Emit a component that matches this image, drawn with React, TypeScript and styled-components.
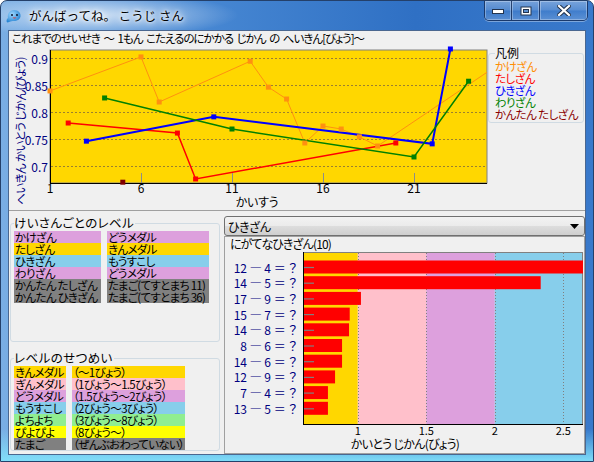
import React from "react";
import styled, { createGlobalStyle } from "styled-components";

const GlobalStyle = createGlobalStyle`
  html, body { margin: 0; padding: 0; background: #ffffff; }
  body {
    font-family: "Noto Sans CJK JP", "Noto Sans", sans-serif;
    font-feature-settings: "palt";
  }
`;

const Frame = styled.div`
  position: relative;
  width: 594px;
  height: 462px;
  box-sizing: border-box;
  border: 1px solid #24406a;
  border-radius: 7px 7px 0 0;
  padding: 0 7px 6px 7px;
  display: flex;
  flex-direction: column;
  overflow: hidden;
  background:
    radial-gradient(ellipse 190px 30px at 95px 14px, rgba(255, 255, 255, 0.7), rgba(255, 255, 255, 0) 75%),
    linear-gradient(180deg, rgba(0, 0, 0, 0) 93%, rgba(130, 225, 250, 0.95) 100%),
    linear-gradient(90deg, #7aaee4 0%, #4d8dd6 25%, #2f70c4 70%, #3979cb 100%);
`;

const TitleBar = styled.div`
  height: 29px;
  margin: 0 -7px;
  padding: 0 5px 0 4px;
  display: flex;
  align-items: flex-start;
  flex-shrink: 0;
`;

const AppIcon = styled.svg`
  margin-top: 7px;
  flex-shrink: 0;
`;

const TitleText = styled.div`
  margin-left: 7px;
  line-height: 29px;
  font-size: 12.5px;
  font-feature-settings: normal;
  color: #000;
  text-shadow: 0 0 6px #fff, 0 0 3px #fff, 0 0 10px #fff;
  flex: 1;
  white-space: pre;
`;

const CaptionGroup = styled.div`
  display: flex;
  height: 19px;
  border-radius: 0 0 5px 5px;
  border: 1px solid rgba(18, 38, 78, 0.75);
  border-top: none;
  overflow: hidden;
  box-shadow: 0 1px 0 rgba(255, 255, 255, 0.35);
`;

const CaptionButton = styled.div<{ $w: number; $last?: boolean }>`
  width: ${(p) => p.$w}px;
  height: 100%;
  box-sizing: border-box;
  border-right: ${(p) => (p.$last ? "none" : "1px solid rgba(18, 38, 78, 0.75)")};
  display: flex;
  align-items: center;
  justify-content: center;
  background: linear-gradient(
    180deg,
    rgba(255, 255, 255, 0.32) 0%,
    rgba(255, 255, 255, 0.16) 48%,
    rgba(255, 255, 255, 0.04) 52%,
    rgba(255, 255, 255, 0.18) 100%
  );
  box-shadow: inset 0 0 0 1px rgba(255, 255, 255, 0.3);
`;

const Client = styled.div`
  flex: 1;
  min-height: 0;
  border: 1px solid #4a6790;
  background: #f0f0f0;
  display: flex;
  flex-direction: column;
  color: #000;
`;

const TopPanel = styled.div`
  height: 179px;
  border-bottom: 1px solid #a0a0a0;
  display: flex;
  flex-direction: column;
  flex-shrink: 0;
`;

const ChartTitle = styled.div`
  height: 15px;
  line-height: 15px;
  padding-left: 3px;
  font-size: 11.5px;
  letter-spacing: -1px;
  word-spacing: 2px;
  white-space: pre;
`;

const ChartRow = styled.div`
  display: flex;
  align-items: flex-start;
`;

const LegendBox = styled.fieldset`
  margin: 0;
  min-width: 0;
  width: 96px;
  box-sizing: border-box;
  padding: 0 0 2px 6px;
  border: 1px solid #d0dbe3;
  border-radius: 3px;
`;

const BoxTitle = styled.legend`
  padding: 0 1px 0 0;
  line-height: 14px;
  font-size: 12px;
`;

const LegendItem = styled.div<{ $color: string }>`
  color: ${(p) => p.$color};
  font-size: 11.5px;
  line-height: 12px;
  letter-spacing: -0.6px;
  white-space: nowrap;
`;

const Lower = styled.div`
  flex: 1;
  min-height: 0;
  display: flex;
  gap: 1px;
`;

const LeftPane = styled.div`
  width: 213px;
  flex-shrink: 0;
  padding: 5px 0 0 1px;
  box-sizing: border-box;
  display: flex;
  flex-direction: column;
`;

const GroupBox = styled.fieldset<{ $gap?: number; $bottom: number }>`
  margin: ${(p) => p.$gap ?? 0}px 0 0 0;
  min-width: 0;
  width: 210px;
  box-sizing: border-box;
  padding: 1px 0 ${(p) => p.$bottom}px 3px;
  border: 1px solid #d0dbe3;
  border-radius: 3px;
`;

const GroupTitle = styled.legend`
  padding: 0 1px 0 0;
  line-height: 14px;
  font-size: 12.5px;
  letter-spacing: 0.4px;
`;

const LevelGrid = styled.div<{ $cols: string }>`
  display: grid;
  grid-template-columns: ${(p) => p.$cols};
  column-gap: 6px;
`;

const Cell = styled.div<{ $bg: string }>`
  background: ${(p) => p.$bg};
  height: 12px;
  line-height: 12px;
  font-size: 11.5px;
  padding-left: 1px;
  white-space: nowrap;
  letter-spacing: -0.7px;
`;

const RightPane = styled.div`
  flex: 1;
  min-width: 0;
  display: flex;
  flex-direction: column;
  padding: 5px 0 0 1px;
`;

const Combo = styled.div`
  height: 20px;
  box-sizing: border-box;
  border: 1px solid #707070;
  border-radius: 3px;
  background: linear-gradient(180deg, #f2f2f2 0%, #ebebeb 50%, #dddddd 50%, #cfcfcf 100%);
  display: flex;
  align-items: center;
  padding: 0 5px 0 3px;
  font-size: 12px;
  letter-spacing: -0.4px;
  flex-shrink: 0;
`;

const ComboText = styled.span`
  flex: 1;
`;

const ListPanel = styled.div`
  flex: 1;
  min-height: 0;
  border: 1px solid #a0a0a0;
  display: flex;
  flex-direction: column;
`;

const PanelTitle = styled.div`
  height: 14px;
  line-height: 14px;
  padding-left: 5px;
  font-size: 12px;
  letter-spacing: -0.9px;
  white-space: nowrap;
`;

type Pt = [number, number];
interface Series {
  name: string;
  color: string;
  text: string;
  width: number;
  points: Pt[];
}

const series: Series[] = [
  {
    name: "かけざん",
    color: "#ff9010",
    text: "#ff8c00",
    width: 1,
    points: [
      [1, 0.839], [6, 0.902], [7, 0.8185], [12, 0.894], [13, 0.846], [14, 0.824],
      [15, 0.7426], [16, 0.774], [17, 0.7685], [18, 0.754], [19, 0.737], [26, 0.896],
    ],
  },
  {
    name: "たしざん",
    color: "#ff0000",
    text: "#ff0000",
    width: 1.5,
    points: [[2, 0.7796], [8, 0.761], [9, 0.676], [20, 0.7426]],
  },
  {
    name: "ひきざん",
    color: "#0000ff",
    text: "#0000ff",
    width: 2,
    points: [[3, 0.746], [10, 0.791], [22, 0.741], [23, 0.9167]],
  },
  {
    name: "わりざん",
    color: "#008000",
    text: "#008000",
    width: 1.5,
    points: [[4, 0.826], [11, 0.7685], [21, 0.7167], [24, 0.857]],
  },
  { name: "かんたん たしざん", color: "#800000", text: "#8b0000", width: 1.5, points: [[5, 0.67]] },
];

const px = (n: number) => 41 + (n - 1) * 18.2;
const py = (v: number) => 120 - (v - 0.7) * 540;

const LineChart = () => {
  const grid = [0.7, 0.75, 0.8, 0.85, 0.9];
  const ticks = [1, 6, 11, 16, 21];
  return (
    <svg width={479} height={164} style={{ flexShrink: 0, display: "block" }}>
      <defs>
        <clipPath id="plotClip">
          <rect x={41} y={4} width={437} height={133} />
        </clipPath>
      </defs>
      <rect x={41} y={4} width={437} height={133} fill="#ffd700" stroke="#808080" strokeWidth={1} />
      {grid.map((g) => (
        <line key={g} x1={42} x2={477} y1={Math.round(py(g)) + 0.5} y2={Math.round(py(g)) + 0.5} stroke="#9a8030" strokeDasharray="2 2" />
      ))}
      {ticks.slice(1).map((t) => (
        <line key={t} x1={Math.round(px(t)) + 0.5} x2={Math.round(px(t)) + 0.5} y1={127} y2={137} stroke="#8c8c8c" />
      ))}
      <line x1={41.5} x2={41.5} y1={4} y2={137.5} stroke="#000" />
      <line x1={41} x2={478} y1={137.5} y2={137.5} stroke="#000" />
      <g clipPath="url(#plotClip)">
        {series.map((s) => (
          <polyline
            key={s.name}
            points={s.points.map(([n, v]) => `${px(n)},${py(v)}`).join(" ")}
            fill="none"
            stroke={s.color}
            strokeWidth={s.width}
          />
        ))}
      </g>
      {series.map((s) =>
        s.points
          .filter(([n]) => n <= 25)
          .map(([n, v]) => (
            <rect key={s.name + n} x={px(n) - 2.5} y={py(v) - 2.5} width={5} height={5} fill={s.color} />
          ))
      )}
      {grid.map((g) => (
        <text key={g} x={39} y={py(g)} textAnchor="end" dominantBaseline="central" fontSize={12} fill="#000080">
          {String(g)}
        </text>
      ))}
      {ticks.map((t) => (
        <text key={t} x={px(t)} y={141} textAnchor="middle" dominantBaseline="central" fontSize={12} fill="#000">
          {t}
        </text>
      ))}
      <text x={248} y={155} textAnchor="middle" dominantBaseline="central" fontSize={12} letterSpacing={-0.3} fill="#000">
        かいすう
      </text>
      <text
        x={11}
        y={85}
        transform="rotate(-90 11 85)"
        textAnchor="middle"
        dominantBaseline="central"
        fontSize={11.5}
        letterSpacing={-0.6}
        fill="#000080"
      >
        へいきん かいとう じかん(びょう)
      </text>
    </svg>
  );
};

const bands = [
  { from: 0.6, to: 1, color: "#ffd700" },
  { from: 1, to: 1.5, color: "#ffc0cb" },
  { from: 1.5, to: 2, color: "#dda0dd" },
  { from: 2, to: 2.644, color: "#87ceeb" },
];

const problems: { label: string; time: number }[] = [
  { label: "12 ― 4 ＝ ？", time: 2.9 },
  { label: "14 ― 5 ＝ ？", time: 2.335 },
  { label: "17 ― 9 ＝ ？", time: 1.023 },
  { label: "15 ― 7 ＝ ？", time: 0.941 },
  { label: "14 ― 8 ＝ ？", time: 0.936 },
  { label: "8 ― 6 ＝ ？", time: 0.885 },
  { label: "14 ― 6 ＝ ？", time: 0.885 },
  { label: "12 ― 9 ＝ ？", time: 0.834 },
  { label: "7 ― 4 ＝ ？", time: 0.782 },
  { label: "13 ― 5 ＝ ？", time: 0.782 },
];

const bx = (v: number) => 78 + (v - 0.6) * 137;

const BarChart = () => (
  <svg width={360} height={201} style={{ display: "block" }}>
    <defs>
      <clipPath id="barClip">
        <rect x={78} y={1} width={280} height={172} />
      </clipPath>
    </defs>
    {bands.map((b) => (
      <rect key={b.color} x={bx(b.from)} y={1} width={bx(b.to) - bx(b.from)} height={172} fill={b.color} />
    ))}
    <rect x={78.5} y={1.5} width={279} height={172} fill="none" stroke="#808080" />
    {[1, 1.5, 2, 2.5].map((g) => (
      <line key={g} x1={Math.round(bx(g)) + 0.5} x2={Math.round(bx(g)) + 0.5} y1={2} y2={173} stroke="#808080" strokeDasharray="1 2" />
    ))}
    <g clipPath="url(#barClip)">
      {problems.map((p, i) => {
        const cy = 16 + i * 15.7;
        return (
          <g key={i}>
            <rect x={78} y={cy - 6.5} width={bx(p.time) - 78} height={13} fill="#ff0000" />
            <line x1={79} x2={89} y1={cy + 0.5} y2={cy + 0.5} stroke="#808080" strokeWidth={1.2} />
          </g>
        );
      })}
    </g>
    <line x1={78.5} x2={78.5} y1={1} y2={173.5} stroke="#000" />
    <line x1={78} x2={358} y1={173.5} y2={173.5} stroke="#000" />
    {problems.map((p, i) => (
      <text key={i} x={72} y={16 + i * 15.7} textAnchor="end" dominantBaseline="central" fontSize={12} fill="#000080">
        {p.label}
      </text>
    ))}
    {[1, 1.5, 2, 2.5].map((g) => (
      <text key={g} x={bx(g)} y={179} textAnchor="middle" dominantBaseline="central" fontSize={11} fill="#000">
        {String(g)}
      </text>
    ))}
    <text x={180} y={192} textAnchor="middle" dominantBaseline="central" fontSize={12} letterSpacing={-0.7} fill="#000">
      かいとう じかん(びょう)
    </text>
  </svg>
);

const levels = [
  { op: "かけざん", medal: "どうメダル", bg: "#dda0dd" },
  { op: "たしざん", medal: "きんメダル", bg: "#ffd700" },
  { op: "ひきざん", medal: "もうすこし", bg: "#87ceeb" },
  { op: "わりざん", medal: "どうメダル", bg: "#dda0dd" },
  { op: "かんたん たしざん", medal: "たまご(てすとまち 11)", bg: "#808080" },
  { op: "かんたん ひきざん", medal: "たまご(てすとまち 36)", bg: "#808080" },
];

const legendRows = [
  { name: "きんメダル", desc: "（〜1びょう）", bg: "#ffd700" },
  { name: "ぎんメダル", desc: "（1びょう〜1.5びょう）", bg: "#ffc0cb" },
  { name: "どうメダル", desc: "（1.5びょう〜2びょう）", bg: "#dda0dd" },
  { name: "もうすこし", desc: "（2びょう〜3びょう）", bg: "#87ceeb" },
  { name: "よちよち", desc: "（3びょう〜8びょう）", bg: "#90ee90" },
  { name: "ぴよぴよ", desc: "（8びょう〜）", bg: "#ffff00" },
  { name: "たまご", desc: "（ぜんぶおわっていない）", bg: "#808080" },
];

const SealIcon = () => (
  <AppIcon width={17} height={17} viewBox="0 0 17 17">
    <defs>
      <radialGradient id="sealBody" cx="0.4" cy="0.35" r="0.7">
        <stop offset="0" stopColor="#9fd8ff" />
        <stop offset="1" stopColor="#1f7fd0" />
      </radialGradient>
    </defs>
    <path d="M4 14 C1 16 1 11 3 10 C2 6 5 2 9 2 C13.5 2 16 5 15.5 8.5 C15 11.5 12 13 9 13 C7 13 6 13 4 14 Z" fill="url(#sealBody)" />
    <circle cx={7} cy={7} r={1.1} fill="#102040" />
    <circle cx={12} cy={7} r={1.1} fill="#102040" />
    <path d="M7.5 9.5 Q9.5 11.5 11.5 9.5 Z" fill="#e03030" />
  </AppIcon>
);

const MinGlyph = () => (
  <svg width={12} height={6} viewBox="0 0 12 6">
    <rect x={0.5} y={1.5} width={11} height={4} fill="#fff" stroke="#23344f" />
  </svg>
);

const MaxGlyph = () => (
  <svg width={12} height={10} viewBox="0 0 12 10">
    <rect x={0.5} y={0.5} width={11} height={9} fill="#23344f" />
    <rect x={1.5} y={1.5} width={9} height={7} fill="#fff" />
    <rect x={3.5} y={3.5} width={5} height={3} fill="#5a8fd0" stroke="#23344f" />
  </svg>
);

const CloseGlyph = () => (
  <svg width={14} height={11} viewBox="0 0 14 11">
    <path d="M2 1 L12 10 M12 1 L2 10" stroke="#23344f" strokeWidth={4.2} strokeLinecap="square" />
    <path d="M2 1 L12 10 M12 1 L2 10" stroke="#fff" strokeWidth={2.2} strokeLinecap="square" />
  </svg>
);

const ArrowDown = () => (
  <svg width={9} height={5} viewBox="0 0 9 5">
    <path d="M0 0 H9 L4.5 5 Z" fill="#000" />
  </svg>
);

export default function App() {
  return (
    <>
      <GlobalStyle />
      <Frame>
        <TitleBar>
          <SealIcon />
          <TitleText>がんばってね。 こうじ さん</TitleText>
          <CaptionGroup>
            <CaptionButton $w={27}>
              <MinGlyph />
            </CaptionButton>
            <CaptionButton $w={28}>
              <MaxGlyph />
            </CaptionButton>
            <CaptionButton $w={47} $last>
              <CloseGlyph />
            </CaptionButton>
          </CaptionGroup>
        </TitleBar>
        <Client>
          <TopPanel>
            <ChartTitle>これまでのせいせき 〜 1もん こたえるのにかかる じかん の へいきん[びょう]〜</ChartTitle>
            <ChartRow>
              <LineChart />
              <LegendBox>
                <BoxTitle>凡例</BoxTitle>
                {series.map((s) => (
                  <LegendItem key={s.name} $color={s.text}>
                    {s.name}
                  </LegendItem>
                ))}
              </LegendBox>
            </ChartRow>
          </TopPanel>
          <Lower>
            <LeftPane>
              <GroupBox $bottom={38}>
                <GroupTitle>けいさんごとのレベル</GroupTitle>
                <LevelGrid $cols="87px 102px">
                  {levels.map((l) => (
                    <React.Fragment key={l.op}>
                      <Cell $bg={l.bg}>{l.op}</Cell>
                      <Cell $bg={l.bg}>{l.medal}</Cell>
                    </React.Fragment>
                  ))}
                </LevelGrid>
              </GroupBox>
              <GroupBox $gap={9} $bottom={0}>
                <GroupTitle>レベルのせつめい</GroupTitle>
                <LevelGrid $cols="52px 113px">
                  {legendRows.map((l) => (
                    <React.Fragment key={l.name}>
                      <Cell $bg={l.bg}>{l.name}</Cell>
                      <Cell $bg={l.bg}>{l.desc}</Cell>
                    </React.Fragment>
                  ))}
                </LevelGrid>
              </GroupBox>
            </LeftPane>
            <RightPane>
              <Combo>
                <ComboText>ひきざん</ComboText>
                <ArrowDown />
              </Combo>
              <ListPanel>
                <PanelTitle>にがてなひきざん(10)</PanelTitle>
                <BarChart />
              </ListPanel>
            </RightPane>
          </Lower>
        </Client>
      </Frame>
    </>
  );
}
